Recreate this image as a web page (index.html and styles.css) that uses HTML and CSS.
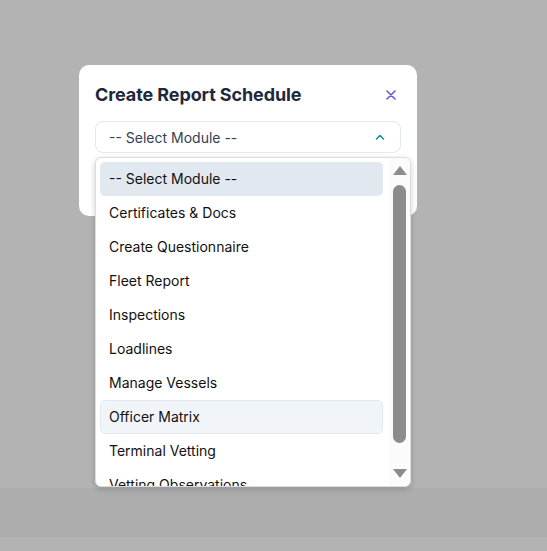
FILE: index.html
```html
<!DOCTYPE html>
<html lang="en">
<head>
    <meta charset="UTF-8">
    <meta name="viewport" content="width=device-width, initial-scale=1.0">
    <title>Create Report Schedule</title>
    <link rel="stylesheet" href="styles.css">
</head>
<body>
    <div class="overlay">
        <div class="modal">
            <div class="modal-header">
                <h2 class="modal-title">Create Report Schedule</h2>
                <button class="close-btn" aria-label="Close">
                    <svg width="10" height="10" viewBox="0 0 10 10"><path d="M1 1 L9 9 M9 1 L1 9" stroke="currentColor" stroke-width="1.6" stroke-linecap="round"/></svg>
                </button>
            </div>

            <div class="select-box">
                <span>-- Select Module --</span>
                <svg class="chevron" width="10" height="6" viewBox="0 0 10 6"><path d="M1.5 5 L5 1.5 L8.5 5" fill="none" stroke="currentColor" stroke-width="1.6" stroke-linecap="round" stroke-linejoin="round"/></svg>
            </div>

            <div class="modal-body"></div>

            <!-- open dropdown of the select -->
            <div class="dropdown">
                <ul class="option-list">
                    <li class="option selected">-- Select Module --</li>
                    <li class="option">Certificates &amp; Docs</li>
                    <li class="option">Create Questionnaire</li>
                    <li class="option">Fleet Report</li>
                    <li class="option">Inspections</li>
                    <li class="option">Loadlines</li>
                    <li class="option">Manage Vessels</li>
                    <li class="option hovered">Officer Matrix</li>
                    <li class="option">Terminal Vetting</li>
                    <li class="option">Vetting Observations</li>
                </ul>
                <div class="scrollbar">
                    <span class="arrow-up"></span>
                    <span class="thumb"></span>
                    <span class="arrow-down"></span>
                </div>
            </div>
        </div>
    </div>
    <div class="footer-band"></div>
</body>
</html>
```

FILE: styles.css
```css
* {
    box-sizing: border-box;
}

body {
    margin: 0;
    padding: 0;
    background-color: #b3b3b3;
    font-family: Inter, "Noto Sans", sans-serif;
    height: 551px;
    overflow: hidden;
}

.overlay {
    height: 488px;
    padding-top: 65px;
    padding-left: 79px;
}

.modal {
    position: relative;
    width: 338px;
    background-color: white;
    border-radius: 10px;
    padding: 15px 16px 0 16px;
}

.modal-header {
    display: flex;
    justify-content: space-between;
    align-items: center;
    height: 29px;
    margin-bottom: 12px;
}

.modal-title {
    margin: 0;
    font-size: 18px;
    font-weight: 700;
    color: #1e293b;
    letter-spacing: -0.1px;
}

.close-btn {
    border: none;
    background: none;
    padding: 0;
    margin-right: 5px;
    color: #5b5bd6;
    display: flex;
}

.select-box {
    height: 32px;
    border: 1px solid #e2e8f0;
    border-radius: 8px;
    display: flex;
    align-items: center;
    justify-content: space-between;
    padding: 0 15px 0 13px;
    font-size: 14px;
    color: #334155;
}

.chevron {
    color: #0f9488;
}

.modal-body {
    height: 63px;
}

.dropdown {
    position: absolute;
    left: 16px;
    top: 92px;
    width: 316px;
    height: 330px;
    background-color: white;
    border: 1px solid #d9dde3;
    border-radius: 6px;
    box-shadow: 0 2px 6px rgba(0, 0, 0, 0.18);
    display: flex;
    overflow: hidden;
}

.option-list {
    flex: 1;
    list-style: none;
    margin: 0;
    padding: 4px 0 0 4px;
    overflow: hidden;
}

.option {
    width: 283px;
    height: 34px;
    line-height: 32px;
    padding-left: 8px;
    font-size: 14px;
    color: #111111;
    border-radius: 5px;
    border: 1px solid transparent;
}

.option.selected {
    background-color: #e2e8f0;
}

.option.hovered {
    background-color: #f1f5f9;
    border-color: #e2e8f0;
}

.scrollbar {
    width: 21px;
    background-color: #fbfbfb;
    display: flex;
    flex-direction: column;
    align-items: center;
    padding-top: 8px;
}

.arrow-up {
    width: 0;
    height: 0;
    border-left: 7px solid transparent;
    border-right: 7px solid transparent;
    border-bottom: 9px solid #8c8c8c;
}

.thumb {
    width: 13px;
    height: 258px;
    margin-top: 10px;
    background-color: #8c8c8c;
    border-radius: 7px;
}

.arrow-down {
    width: 0;
    height: 0;
    margin-top: 26px;
    border-left: 7px solid transparent;
    border-right: 7px solid transparent;
    border-top: 9px solid #8c8c8c;
}

.footer-band {
    height: 49px;
    background-color: #adadad;
}
```
